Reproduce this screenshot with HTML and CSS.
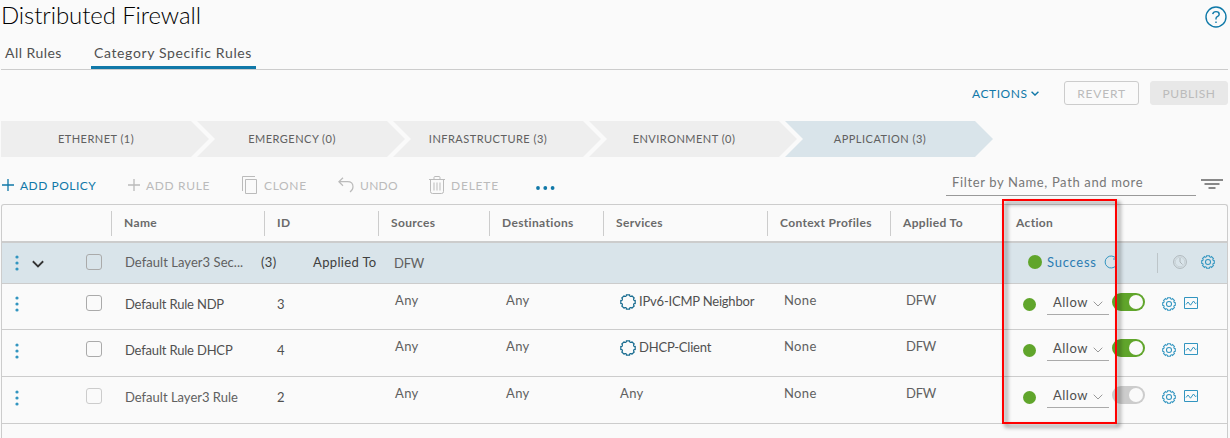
FILE: index.html
```html
<!DOCTYPE html>
<html lang="en">
<head>
<meta charset="utf-8">
<title>Distributed Firewall</title>
<link rel="stylesheet" href="styles.css">
</head>
<body>
<svg class="defs" aria-hidden="true">
  <symbol id="plus" viewBox="0 0 12 12"><path d="M6 0v12M0 6h12"/></symbol>
  <symbol id="chevron" viewBox="0 0 10 6"><path d="M.7.7 5 5 9.3.7"/></symbol>
  <symbol id="service" viewBox="0 0 16 16"><path d="M6.500.8h3a1.400 1.400 0 0 0 2.530 1.050l2.120 2.120a1.400 1.400 0 0 0 1.050 2.530v3a1.400 1.400 0 0 0-1.050 2.530l-2.120 2.120a1.400 1.400 0 0 0-2.530 1.050h-3a1.400 1.400 0 0 0-2.530-1.050l-2.120-2.120a1.400 1.400 0 0 0-1.050-2.530v-3a1.400 1.400 0 0 0 1.050-2.530l2.120-2.120a1.400 1.400 0 0 0 2.530-1.050z"/></symbol>
  <symbol id="gear" viewBox="0 0 16 16"><circle cx="8" cy="8" r="2.900"/><use href="#service"/></symbol>
  <symbol id="chart" viewBox="0 0 14 12"><path d="M.5.5h13v11H.5zM2 7.500l2-2.500 2.500 3.200L9.500 4l1.800 2.500 1.200-.5"/></symbol>
  <symbol id="kebab" viewBox="0 0 4 16"><circle cx="2" cy="2" r="1.600"/><circle cx="2" cy="8" r="1.600"/><circle cx="2" cy="14" r="1.600"/></symbol>
</svg>

<header class="titlebar">
  <h1 class="title">Distributed Firewall</h1>
  <svg class="help" viewBox="0 0 22 22"><circle cx="11" cy="11" r="10"/><path d="M7.700 8.200Q8.200 5.600 11 5.600q3.200 0 3.200 2.600 0 1.600-1.900 2.500-1.300.6-1.300 2v.9M11 15.500v1.600"/></svg>
</header>
<nav class="tabs">
  <a class="tab first">All Rules</a>
  <a class="tab active">Category Specific Rules</a>
</nav>

<div class="actions">
  <span class="actions-menu">ACTIONS <svg class="menu-chevron"><use href="#chevron"/></svg></span>
  <span class="btn revert">REVERT</span>
  <span class="btn publish">PUBLISH</span>
</div>

<div class="steps">
  <div class="step"><span>ETHERNET (1)</span></div>
  <div class="step"><span>EMERGENCY (0)</span></div>
  <div class="step"><span>INFRASTRUCTURE (3)</span></div>
  <div class="step"><span>ENVIRONMENT (0)</span></div>
  <div class="step current"><span>APPLICATION (3)</span></div>
</div>

<div class="toolbar">
  <span class="tool enabled add-policy"><svg class="i-plus"><use href="#plus"/></svg>ADD POLICY</span>
  <span class="tool add-rule"><svg class="i-plus"><use href="#plus"/></svg>ADD RULE</span>
  <span class="tool clone"><svg class="i-clone" viewBox="0 0 16 18"><path d="M3.500 3.500h11v14h-11zM.5 15V.5h12.500"/></svg>CLONE</span>
  <span class="tool undo"><svg class="i-undo" viewBox="0 0 16 16"><path d="M5 .7.9 4.700 5 8.700M1 4.700h8.500q5.500 0 5.500 5 0 3.300-3 5.300"/></svg>UNDO</span>
  <span class="tool delete"><svg class="i-trash" viewBox="0 0 16 18"><path d="M0 3.500h16M5 3V1.500Q5 .5 6 .5h4q1 0 1 1V3M1.500 4v11.500q0 2 2 2h9q2 0 2-2V4M5 6.500v8M8 6.500v8M11 6.500v8"/></svg>DELETE</span>
  <svg class="more" viewBox="0 0 20 4"><circle cx="2" cy="2" r="1.900"/><circle cx="9.300" cy="2" r="1.900"/><circle cx="16.600" cy="2" r="1.900"/></svg>
  <div class="filter">Filter by Name, Path and more</div>
  <svg class="filter-icon" viewBox="0 0 22 10"><path d="M0 1h22M3.500 5h15M7.500 9h7"/></svg>
</div>

<main class="table">
  <div class="row head">
    <div></div>
    <div class="th">Name</div><div class="th">ID</div><div class="th">Sources</div><div class="th">Destinations</div><div class="th">Services</div><div class="th">Context Profiles</div><div class="th">Applied To</div><div class="th plain">Action</div>
  </div>

  <div class="row group">
    <div class="controls"><svg class="kebab"><use href="#kebab"/></svg><svg class="expand"><use href="#chevron"/></svg><i class="check"></i></div>
    <div class="group-name">Default Layer3 Sec...</div>
    <div class="group-meta"><span class="count">(3)</span><span>Applied To</span></div>
    <div class="group-scope">DFW</div>
    <div class="group-status">
      <i class="dot"></i><span class="success">Success</span>
      <svg class="refresh" viewBox="0 0 14 14"><path d="M12 10.500a6 6 0 1 1 0-7M12.500.5v3.500H9"/></svg>
      <i class="divider"></i>
      <svg class="clock" viewBox="0 0 14 14"><circle cx="7" cy="7" r="6.400"/><circle cx="7" cy="7" r="4.800" opacity=".4"/><path d="M7 3v4l2.500 2.500"/></svg>
      <svg class="gear"><use href="#gear"/></svg>
    </div>
  </div>

  <div class="row rule short">
    <div class="controls"><svg class="kebab"><use href="#kebab"/></svg><i class="check"></i></div>
    <div class="name">Default Rule NDP</div><div class="id">3</div><div class="val">Any</div><div class="val">Any</div>
    <div class="svc"><svg><use href="#service"/></svg>IPv6-ICMP Neighbor</div>
    <div class="val">None</div><div class="val caps">DFW</div>
    <div class="action"><i class="dot"></i><span class="select">Allow<svg><use href="#chevron"/></svg></span><i class="toggle"></i><svg class="gear"><use href="#gear"/></svg><svg class="chart"><use href="#chart"/></svg></div>
  </div>
  <div class="row rule">
    <div class="controls"><svg class="kebab"><use href="#kebab"/></svg><i class="check"></i></div>
    <div class="name">Default Rule DHCP</div><div class="id">4</div><div class="val">Any</div><div class="val">Any</div>
    <div class="svc"><svg><use href="#service"/></svg>DHCP-Client</div>
    <div class="val">None</div><div class="val caps">DFW</div>
    <div class="action"><i class="dot"></i><span class="select">Allow<svg><use href="#chevron"/></svg></span><i class="toggle"></i><svg class="gear"><use href="#gear"/></svg><svg class="chart"><use href="#chart"/></svg></div>
  </div>
  <div class="row rule locked">
    <div class="controls"><svg class="kebab"><use href="#kebab"/></svg><i class="check"></i></div>
    <div class="name">Default Layer3 Rule</div><div class="id">2</div><div class="val">Any</div><div class="val">Any</div>
    <div class="val">Any</div>
    <div class="val">None</div><div class="val caps">DFW</div>
    <div class="action"><i class="dot"></i><span class="select">Allow<svg><use href="#chevron"/></svg></span><i class="toggle off"></i><svg class="gear"><use href="#gear"/></svg><svg class="chart"><use href="#chart"/></svg></div>
  </div>
  <div class="highlight"></div>
</main>
</body>
</html>
```
FILE: styles.css
```css
* { box-sizing: border-box; }
body {
  margin: 0;
  width: 1230px;
  height: 438px;
  overflow: hidden;
  background: #fafafa;
  color: #606060;
  font: 13px/16px Lato, sans-serif;
  letter-spacing: .35px;
  white-space: nowrap;
}
svg { display: block; flex: none; fill: none; stroke: currentColor; }
.defs { display: none; }
i { display: block; flex: none; }

.titlebar { display: flex; justify-content: space-between; height: 40px; padding: 0 3px 0 1px; }
.title { margin: 0; font-size: 24px; line-height: 29px; font-weight: 300; color: #000; letter-spacing: -.1px; }
.help { width: 22px; height: 22px; margin-top: 6px; color: #0f79a8; stroke-width: 1.4; }

.tabs { display: flex; height: 30px; margin: 0 2px 0 1px; border-bottom: 1px solid #ccc; font-size: 14px; letter-spacing: .63px; color: #505050; }
.tab { height: 29px; padding: 5px 3px 0; }
.tab.first { width: 90px; padding-left: 4px; letter-spacing: .45px; }
.tab.active { width: 165px; border-bottom: 3px solid #1078a8; }

.actions { display: flex; height: 51px; padding: 11px 2px 0 972px; font-size: 12px; letter-spacing: .55px; }
.actions-menu { display: flex; width: 92px; padding-top: 5px; color: #1078a8; }
.menu-chevron { width: 8px; height: 5px; margin: 5px 0 0 3px; stroke-width: 1.700; }
.btn { height: 24px; border: 1px solid #ccc; border-radius: 3px; line-height: 23px; text-align: center; color: #bbb; }
.revert { width: 75px; letter-spacing: .8px; }
.publish { width: 78px; margin-left: 11px; background: #e8e8e8; border-color: #e8e8e8; }

.steps { display: flex; height: 36px; margin-left: 1px; font-size: 11px; letter-spacing: .48px; }
.step {
  width: 208px;
  margin-right: -12px;
  background: #eee;
  clip-path: polygon(0 0, 190px 0, 208px 50%, 190px 100%, 0 100%, 18px 50%);
}
.step:first-child { clip-path: polygon(0 0, 190px 0, 208px 50%, 190px 100%, 0 100%); }
.step span { display: block; width: 190px; line-height: 36px; text-align: center; }
.step.current { background: #d9e4ea; }

.toolbar { display: flex; height: 47px; padding-left: 2px; font-size: 12px; letter-spacing: .65px; }
.tool { display: flex; padding-top: 21px; color: #bbb; }
.enabled { color: #1078a8; }
.add-policy { width: 126px; letter-spacing: .5px; }
.add-rule { width: 114px; }
.clone { width: 96px; }
.undo { width: 91px; letter-spacing: .3px; }
.delete { width: 107px; letter-spacing: .8px; }
.i-plus { width: 12px; height: 12px; margin: 1px 6px 0 0; stroke-width: 1.300; }
.i-clone { width: 16px; height: 18px; margin: -2px 6px 0 0; }
.i-undo { width: 16px; height: 16px; margin: -1px 6px 0 0; stroke-width: 1.200; }
.i-trash { width: 16px; height: 18px; margin: -2px 6px 0 0; }
.more { width: 20px; height: 4px; margin-top: 29px; fill: #1078a8; stroke: none; }
.filter { width: 250px; height: 39px; margin-left: 390px; padding: 17px 0 0 6px; border-bottom: 1px solid #999; color: #777; font-size: 13px; letter-spacing: .64px; }
.filter-icon { width: 22px; height: 10px; margin: 22px 0 0 5px; color: #888; stroke-width: 2; }

.table { position: relative; height: 240px; margin: 0 2px 0 1px; border: 1px solid #ccc; border-bottom: 0; border-radius: 3px 3px 0 0; }
.row { display: grid; grid-template-columns: 109px 153px 114px 111px 114px 164px 123px 113px 1fr; height: 47px; border-bottom: 1px solid #ccc; }
.head { height: 38px; border-bottom-width: 2px; font-size: 12px; font-weight: 700; color: #6a6a6a; letter-spacing: .35px; }
.th { height: 25px; margin-top: 6px; padding: 4px 0 0 12px; border-left: 1px solid #ccc; }
.th.plain { border: 0; padding-left: 13px; }
.short { height: 46px; }

.controls { display: flex; padding-left: 13px; color: #3295c0; }
.kebab { width: 4px; height: 16px; margin-top: 13px; fill: currentColor; stroke: none; }
.short .kebab, .group .kebab { margin-top: 12px; }
.check { width: 16px; height: 16px; margin: 11px 0 0 67px; border: 1px solid #aaa; border-radius: 3px; }
.expand { width: 12px; height: 8px; margin: 17px 0 0 13px; color: #333; stroke-width: 1.500; }

.group { grid-template-columns: 109px 147px 127px 633px 1fr; height: 41px; background: #d9e4ea; }
.group .check { margin: 11px 0 0 42px; }
.group-name { padding: 11px 0 0 14px; letter-spacing: .05px; }
.group-meta { display: flex; padding: 11px 0 0 3px; color: #404040; }
.count { width: 52px; }
.group-scope { padding: 12px 0 0 9px; letter-spacing: -.2px; }
.group-status { display: flex; padding-left: 10px; }
.group-status .dot { width: 14px; height: 14px; margin-top: 12px; }
.success { width: 50px; margin: 11px 7px 0 5px; color: #2b7cb3; letter-spacing: .75px; }
.refresh { width: 14px; height: 14px; margin-top: 12px; color: #3295c0; }
.divider { width: 1px; height: 20px; margin: 10px 15px 0 39px; background: #bdc5c9; }
.clock { width: 14px; height: 14px; margin-top: 12px; color: #aeb6ba; }
.group-status .gear { margin: 12px 0 0 14px; }

.name { padding: 12px 0 0 14px; color: #505050; letter-spacing: -.18px; }
.id { padding: 12px 0 0 13px; color: #505050; }
.val { padding: 8px 0 0 17px; }
.caps { padding-left: 16px; letter-spacing: -.2px; }
.svc { display: flex; padding: 9px 0 0 17px; color: #505050; letter-spacing: -.2px; }
.svc svg { width: 16px; height: 16px; margin: 1px 3px 0 0; color: #196c90; stroke-width: 1.200; }
.action { display: flex; padding-left: 20px; }
.dot { width: 13px; height: 13px; margin-top: 14px; border-radius: 50%; background: #60a52b; }
.select { display: flex; justify-content: space-between; width: 62px; height: 31px; margin-left: 11px; padding: 10px 6px 0; border-bottom: 1px solid #aaa; color: #505050; letter-spacing: .5px; }
.select svg { width: 10px; height: 6px; margin-top: 7px; color: #999; }
.toggle { width: 33px; height: 18px; margin: 9px 0 0 3px; padding: 2px; border-radius: 9px; background: #60a52b; }
.toggle::after { content: ""; display: block; width: 14px; height: 14px; margin-left: 15px; border-radius: 50%; background: #fafafa; }
.toggle.off { background: #ccc; }
.gear { width: 14px; height: 14px; margin: 13px 0 0 17px; color: #3295c0; stroke-width: 1.200; }
.chart { width: 14px; height: 12px; margin: 13px 0 0 8px; color: #3295c0; }
.locked .check { border-color: #ccc; }
.locked .name { color: #606060; letter-spacing: 0; }

.highlight { position: absolute; left: 1000px; top: -6px; width: 115px; height: 225px; border: 2px solid #f00; filter: drop-shadow(3px 3px 2px rgba(0, 0, 0, .55)); }
```
